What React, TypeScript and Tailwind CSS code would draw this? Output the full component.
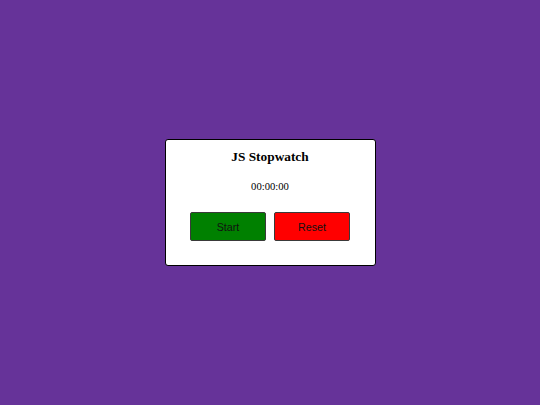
export default function App() {
  return (
    <div className="flex h-[405px] w-full items-center justify-center bg-[#663399]">
      <div className="flex w-[211px] flex-col items-center rounded-[3px] border border-black bg-white pt-[9px] pb-[24px] font-['Liberation_Serif',serif]">
        <h1 className="text-[13.33px] leading-[16px] font-bold text-black">JS Stopwatch</h1>
        <p className="mt-[15px] text-[10.67px] leading-[12px] text-black">00:00:00</p>
        <div className="mt-[20px] flex gap-[8px]">
          <button className="h-[29px] w-[76px] rounded-[2px] border border-[#3a3a3a] bg-[#008000] font-['Liberation_Sans',sans-serif] text-[10.67px] text-[#111]">
            Start
          </button>
          <button className="h-[29px] w-[76px] rounded-[2px] border border-[#3a3a3a] bg-[#ff0000] font-['Liberation_Sans',sans-serif] text-[10.67px] text-[#111]">
            Reset
          </button>
        </div>
      </div>
    </div>
  );
}
